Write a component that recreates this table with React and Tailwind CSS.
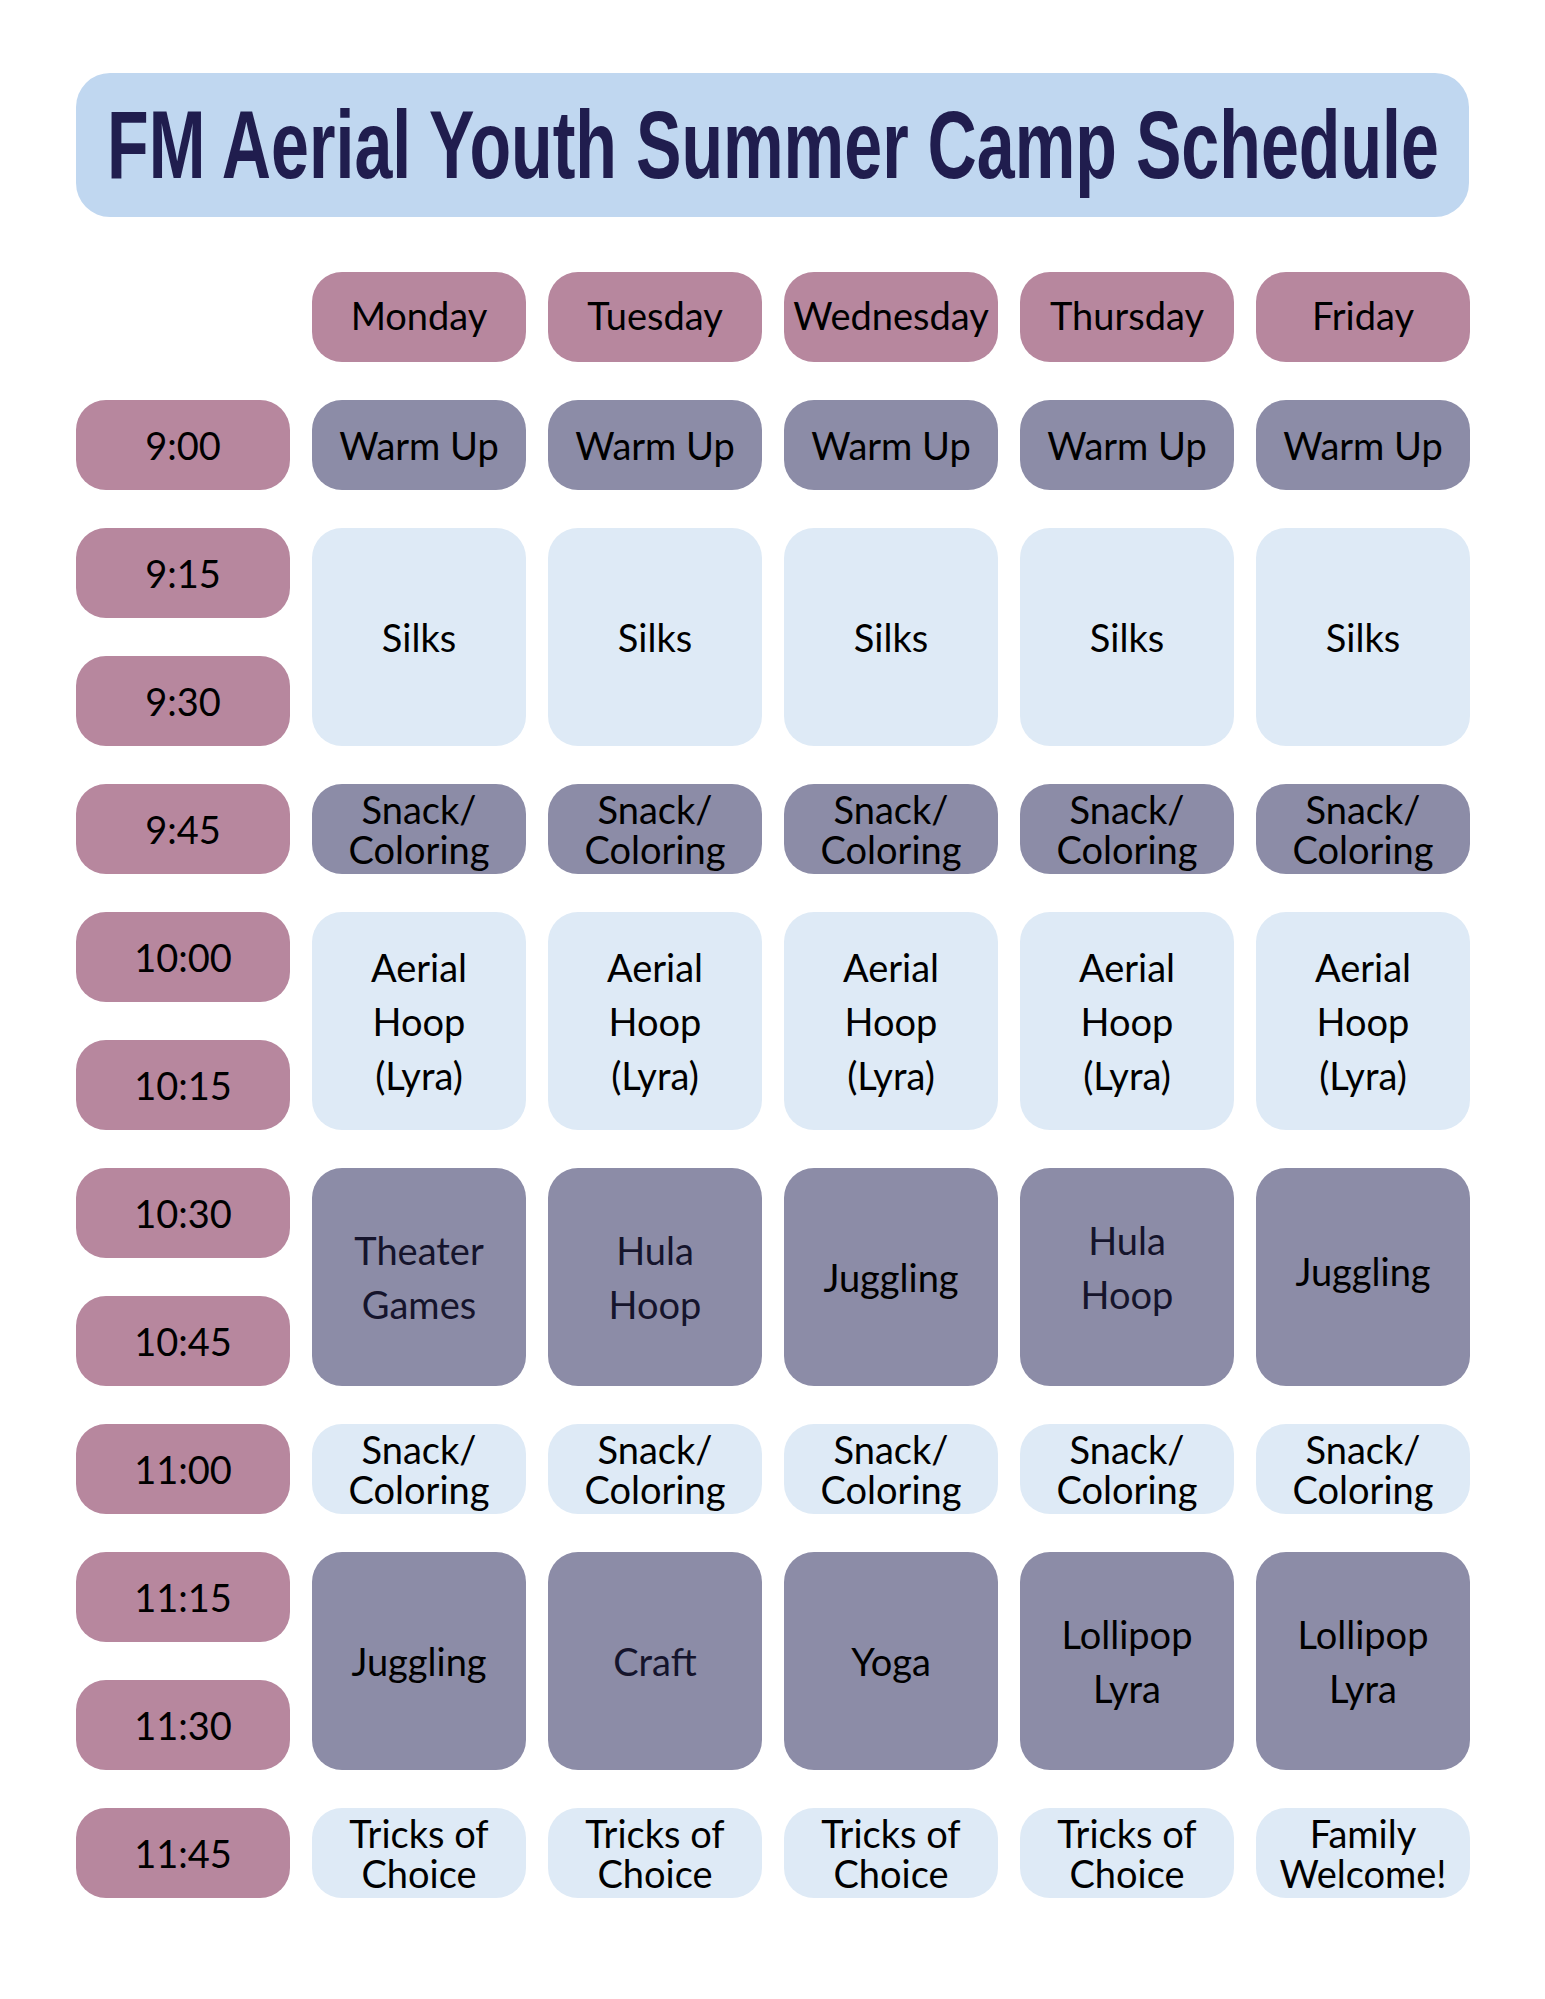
const days = ["Monday", "Tuesday", "Wednesday", "Thursday", "Friday"];

const pink = "bg-[#b7879e]";
const dark = "bg-[#8c8ca7]";
const light = "bg-[#deeaf6]";

// each row: time label, then the cells that start in that row
const rows = [
  { time: "9:00", cells: days.map(() => ({ text: ["Warm Up"], bg: dark })) },
  { time: "9:15", cells: days.map(() => ({ text: ["Silks"], bg: light, span: true })) },
  { time: "9:30", cells: [] },
  { time: "9:45", cells: days.map(() => ({ text: ["Snack/", "Coloring"], bg: dark, tight: true })) },
  { time: "10:00", cells: days.map(() => ({ text: ["Aerial", "Hoop", "(Lyra)"], bg: light, span: true })) },
  { time: "10:15", cells: [] },
  {
    time: "10:30",
    cells: [
      { text: ["Theater", "Games"], bg: dark, span: true, navy: true },
      { text: ["Hula", "Hoop"], bg: dark, span: true, navy: true },
      { text: ["Juggling"], bg: dark, span: true },
      { text: ["Hula", "Hoop"], bg: dark, span: true, navy: true, shift: " pb-5" },
      { text: ["Juggling"], bg: dark, span: true, shift: " pb-3" },
    ],
  },
  { time: "10:45", cells: [] },
  { time: "11:00", cells: days.map(() => ({ text: ["Snack/", "Coloring"], bg: light, tight: true })) },
  {
    time: "11:15",
    cells: [
      { text: ["Juggling"], bg: dark, span: true },
      { text: ["Craft"], bg: dark, span: true, navy: true },
      { text: ["Yoga"], bg: dark, span: true },
      { text: ["Lollipop", "Lyra"], bg: dark, span: true },
      { text: ["Lollipop", "Lyra"], bg: dark, span: true },
    ],
  },
  { time: "11:30", cells: [] },
  {
    time: "11:45",
    cells: [
      ...days.slice(0, 4).map(() => ({ text: ["Tricks of", "Choice"], bg: light, tight: true })),
      { text: ["Family", "Welcome!"], bg: light, tight: true },
    ],
  },
];

function Cell({ cell }) {
  return (
    <div
      className={
        "flex flex-col items-center justify-center rounded-[30px] text-center " +
        cell.bg +
        (cell.span ? " row-span-2" : "") +
        (cell.tight ? " leading-[40px]" : " leading-[54px]") +
        (cell.navy ? " text-[#15142c]" : " text-black") +
        (cell.shift || "")
      }
    >
      {cell.text.map((line) => (
        <span key={line}>{line}</span>
      ))}
    </div>
  );
}

export default function App() {
  return (
    <div className="min-h-[1999px] w-[1545px] bg-white pl-[76px] pt-[73px] font-['Lato','Noto_Sans',sans-serif] text-[38px]">
      <div className="flex h-[144px] w-[1393px] items-center justify-center rounded-[34px] bg-[#c0d7f0]">
        <h1 className="shrink-0 scale-x-[0.71] whitespace-nowrap font-['Liberation_Sans','Arial',sans-serif] text-[96px] font-bold leading-none text-[#201d4e]">
          FM Aerial Youth Summer Camp Schedule
        </h1>
      </div>

      <div className="mt-[55px] grid grid-cols-[repeat(6,214px)] auto-rows-[90px] gap-x-[22px] gap-y-[38px]">
        <div />
        {days.map((d) => (
          <div key={d} className={"flex items-center justify-center rounded-[30px] pb-1 text-black " + pink}>
            {d}
          </div>
        ))}

        {rows.map((row) => (
          <>
            <div
              key={row.time}
              className={"col-start-1 flex items-center justify-center rounded-[30px] text-black " + pink}
            >
              {row.time}
            </div>
            {row.cells.map((cell, i) => (
              <Cell key={row.time + i} cell={cell} />
            ))}
          </>
        ))}
      </div>
    </div>
  );
}
